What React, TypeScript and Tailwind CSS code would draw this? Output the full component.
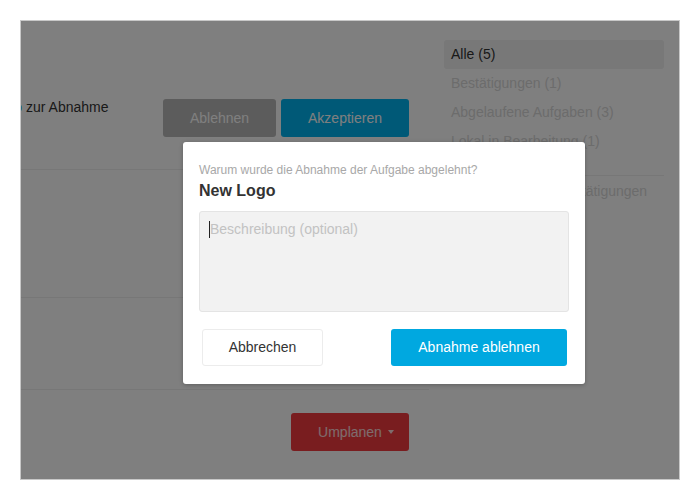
import { useState } from 'react';

const filters = [
  { label: 'Alle (5)', active: true },
  { label: 'Bestätigungen (1)', active: false },
  { label: 'Abgelaufene Aufgaben (3)', active: false },
  { label: 'Lokal in Bearbeitung (1)', active: false },
];

const RejectModal = ({ title }: { title: string }) => {
  const [text, setText] = useState('');

  return (
    <div className="absolute left-[162px] top-[121px] w-[402px] rounded-[3px] bg-white px-4 pb-[18px] pt-5 shadow-[0_1px_4px_rgba(0,0,0,0.25)]">
      <p className="text-[12px] leading-4 text-[#a8a8a8]">
        Warum wurde die Abnahme der Aufgabe abgelehnt?
      </p>
      <h2 className="mt-[2px] text-[16px] font-bold leading-[22px] text-[#333]">
        {title}
      </h2>
      <div className="relative mt-[9px]">
        <textarea
          value={text}
          onChange={(e) => setText(e.target.value)}
          placeholder="Beschreibung (optional)"
          className="block h-[101px] w-full resize-none rounded-[3px] border border-[#e4e4e4] bg-[#f2f2f2] px-[10px] py-2 text-[14px] leading-[18px] text-[#333] outline-none placeholder:text-[#c2c2c2]"
        />
        {text === '' ? (
          <span className="absolute left-[10px] top-[10px] h-[17px] w-px bg-[#222]"></span>
        ) : null}
      </div>
      <div className="mt-[17px] flex items-center justify-between">
        <button className="ml-[3px] h-[37px] w-[121px] rounded-[3px] border border-[#ececec] bg-white text-[14px] text-[#333]">
          Abbrechen
        </button>
        <button className="mr-[2px] h-[37px] w-[176px] rounded-[3px] bg-[#00a8e0] text-[14px] text-white">
          Abnahme ablehnen
        </button>
      </div>
    </div>
  );
};

const App = () => {
  return (
    <div
      className="h-[500px] w-[700px] bg-white p-5"
      style={{ fontFamily: '"Liberation Sans", Arial, sans-serif' }}
    >
      <div className="relative h-[460px] w-[660px] overflow-hidden border border-[#c8c8c8] bg-white">
        <div className="flex h-full">
          {/* main column */}
          <div className="w-[408px]">
            <div className="flex h-[149px] items-start justify-between border-b border-[#eeeeee] pr-5 pt-[78px]">
              <p className="-ml-[30px] text-[14px] leading-4 text-[#333]">
                <span className="text-[#0a9bd0]">Logo</span> zur Abnahme
              </p>
              <div className="flex gap-[5px]">
                <button className="h-[38px] w-[113px] rounded-[3px] bg-[#b8b8b8] text-[14px] text-white">
                  Ablehnen
                </button>
                <button className="h-[38px] w-[128px] rounded-[3px] bg-[#00b2ee] text-[14px] text-white">
                  Akzeptieren
                </button>
              </div>
            </div>
            <div className="h-[128px] border-b border-[#eeeeee]"></div>
            <div className="h-[92px] border-b border-[#eeeeee]"></div>
            <div className="flex justify-end pr-5 pt-[23px]">
              <button className="flex h-[38px] w-[118px] items-center justify-center gap-[6px] rounded-[3px] bg-[#f23a3f] pl-[12px] text-[14px] text-white/80">
                Umplanen
                <svg width="6" height="4" viewBox="0 0 6 4">
                  <path d="M0 0h6L3 4z" fill="currentColor" />
                </svg>
              </button>
            </div>
          </div>

          {/* sidebar */}
          <div className="ml-[15px] w-[220px] pt-[19px]">
            {filters.map((f) => (
              <div
                key={f.label}
                className={`flex h-[29px] items-center rounded-[3px] px-[7px] text-[14px] ${
                  f.active ? 'bg-[#f0f0f0] text-[#333]' : 'text-[#d8d8d8]'
                }`}
              >
                {f.label}
              </div>
            ))}
            <div className="mt-[19px] border-t border-[#eeeeee] pt-px">
              <div className="flex h-[29px] items-center px-[7px] text-[14px] text-[#d8d8d8]">
                Abgeschlossene Bestätigungen
              </div>
            </div>
          </div>
        </div>

        <div className="absolute inset-0 bg-black/50"></div>
        <RejectModal title="New Logo" />
      </div>
    </div>
  );
};

export default App;
